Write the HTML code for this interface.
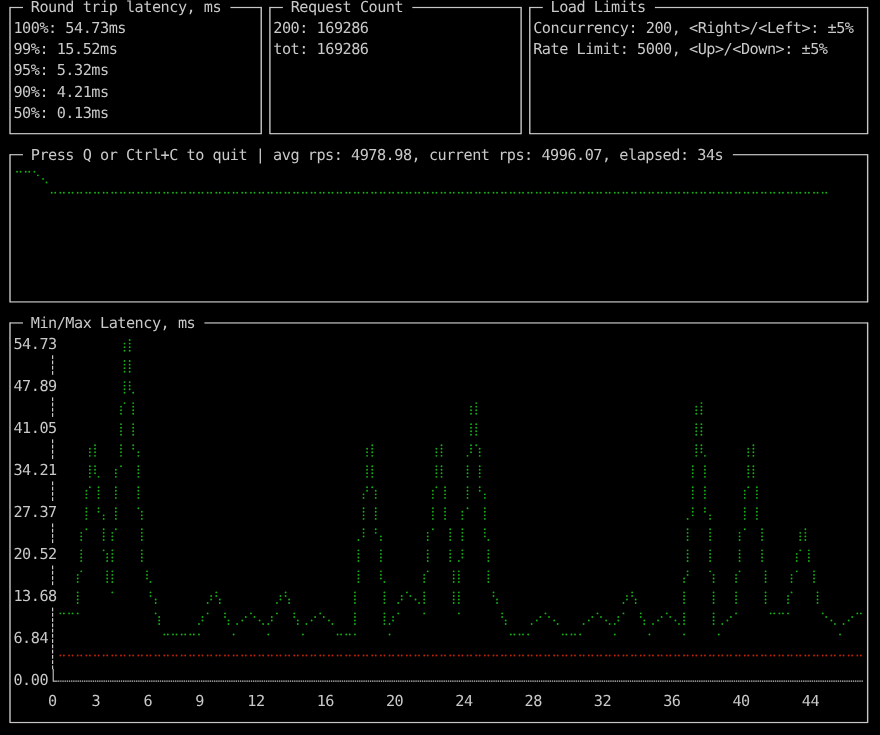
<!DOCTYPE html>
<html lang="en">
<head>
<meta charset="utf-8">
<title>load test dashboard</title>
<style>
html,body{margin:0;padding:0;background:#000;}
body{width:880px;height:735px;overflow:hidden;position:relative;}
#term{position:absolute;left:0;top:0;width:880px;height:735px;overflow:hidden;}
#txt{position:absolute;left:0;top:0;width:880px;height:735px;will-change:transform;}
#term svg{position:absolute;left:0;top:0;}
.t{position:absolute;white-space:pre;font-family:"DejaVu Sans Mono","Liberation Mono",monospace;font-size:15.2px;line-height:21px;height:21px;color:#c9c9c9;letter-spacing:-0.4882px;text-rendering:geometricPrecision;-webkit-font-smoothing:antialiased;}
</style>
</head>
<body>
<div id="term">
<svg width="880" height="735" viewBox="0 0 880 735">
<rect x="9.30" y="6.90" width="1.40" height="127.23" fill="#c6c6c6"/>
<rect x="260.53" y="6.90" width="1.40" height="127.23" fill="#c6c6c6"/>
<rect x="10.00" y="133.08" width="251.23" height="1.20" fill="#c6c6c6"/>
<rect x="10.00" y="6.90" width="12.99" height="1.20" fill="#c6c6c6"/>
<rect x="230.41" y="6.90" width="30.82" height="1.20" fill="#c6c6c6"/>
<rect x="269.19" y="6.90" width="1.40" height="127.23" fill="#c6c6c6"/>
<rect x="520.42" y="6.90" width="1.40" height="127.23" fill="#c6c6c6"/>
<rect x="269.89" y="133.08" width="251.23" height="1.20" fill="#c6c6c6"/>
<rect x="269.89" y="6.90" width="12.99" height="1.20" fill="#c6c6c6"/>
<rect x="412.33" y="6.90" width="108.79" height="1.20" fill="#c6c6c6"/>
<rect x="529.08" y="6.90" width="1.40" height="127.23" fill="#c6c6c6"/>
<rect x="866.94" y="6.90" width="1.40" height="127.23" fill="#c6c6c6"/>
<rect x="529.78" y="133.08" width="337.86" height="1.20" fill="#c6c6c6"/>
<rect x="529.78" y="6.90" width="12.99" height="1.20" fill="#c6c6c6"/>
<rect x="654.89" y="6.90" width="212.74" height="1.20" fill="#c6c6c6"/>
<rect x="9.30" y="154.11" width="1.40" height="148.26" fill="#c6c6c6"/>
<rect x="866.94" y="154.11" width="1.40" height="148.26" fill="#c6c6c6"/>
<rect x="10.00" y="301.32" width="857.64" height="1.20" fill="#c6c6c6"/>
<rect x="10.00" y="154.11" width="12.99" height="1.20" fill="#c6c6c6"/>
<rect x="732.86" y="154.11" width="134.78" height="1.20" fill="#c6c6c6"/>
<rect x="9.30" y="322.35" width="1.40" height="400.62" fill="#c6c6c6"/>
<rect x="866.94" y="322.35" width="1.40" height="400.62" fill="#c6c6c6"/>
<rect x="10.00" y="721.92" width="857.64" height="1.20" fill="#c6c6c6"/>
<rect x="10.00" y="322.35" width="12.99" height="1.20" fill="#c6c6c6"/>
<rect x="204.42" y="322.35" width="663.22" height="1.20" fill="#c6c6c6"/>
<rect x="52.00" y="355.26" width="1.2" height="3.8" fill="#c8c8c8"/>
<rect x="52.00" y="360.52" width="1.2" height="3.8" fill="#c8c8c8"/>
<rect x="52.00" y="365.77" width="1.2" height="3.8" fill="#c8c8c8"/>
<rect x="52.00" y="371.03" width="1.2" height="3.8" fill="#c8c8c8"/>
<rect x="52.00" y="397.32" width="1.2" height="3.8" fill="#c8c8c8"/>
<rect x="52.00" y="402.58" width="1.2" height="3.8" fill="#c8c8c8"/>
<rect x="52.00" y="407.84" width="1.2" height="3.8" fill="#c8c8c8"/>
<rect x="52.00" y="413.09" width="1.2" height="3.8" fill="#c8c8c8"/>
<rect x="52.00" y="439.38" width="1.2" height="3.8" fill="#c8c8c8"/>
<rect x="52.00" y="444.64" width="1.2" height="3.8" fill="#c8c8c8"/>
<rect x="52.00" y="449.89" width="1.2" height="3.8" fill="#c8c8c8"/>
<rect x="52.00" y="455.15" width="1.2" height="3.8" fill="#c8c8c8"/>
<rect x="52.00" y="481.44" width="1.2" height="3.8" fill="#c8c8c8"/>
<rect x="52.00" y="486.70" width="1.2" height="3.8" fill="#c8c8c8"/>
<rect x="52.00" y="491.96" width="1.2" height="3.8" fill="#c8c8c8"/>
<rect x="52.00" y="497.21" width="1.2" height="3.8" fill="#c8c8c8"/>
<rect x="52.00" y="523.50" width="1.2" height="3.8" fill="#c8c8c8"/>
<rect x="52.00" y="528.76" width="1.2" height="3.8" fill="#c8c8c8"/>
<rect x="52.00" y="534.01" width="1.2" height="3.8" fill="#c8c8c8"/>
<rect x="52.00" y="539.27" width="1.2" height="3.8" fill="#c8c8c8"/>
<rect x="52.00" y="565.56" width="1.2" height="3.8" fill="#c8c8c8"/>
<rect x="52.00" y="570.82" width="1.2" height="3.8" fill="#c8c8c8"/>
<rect x="52.00" y="576.08" width="1.2" height="3.8" fill="#c8c8c8"/>
<rect x="52.00" y="581.33" width="1.2" height="3.8" fill="#c8c8c8"/>
<rect x="52.00" y="607.62" width="1.2" height="3.8" fill="#c8c8c8"/>
<rect x="52.00" y="612.88" width="1.2" height="3.8" fill="#c8c8c8"/>
<rect x="52.00" y="618.13" width="1.2" height="3.8" fill="#c8c8c8"/>
<rect x="52.00" y="623.39" width="1.2" height="3.8" fill="#c8c8c8"/>
<rect x="52.00" y="628.65" width="1.2" height="3.8" fill="#c8c8c8"/>
<rect x="52.00" y="633.91" width="1.2" height="3.8" fill="#c8c8c8"/>
<rect x="52.00" y="639.17" width="1.2" height="3.8" fill="#c8c8c8"/>
<rect x="52.00" y="644.42" width="1.2" height="3.8" fill="#c8c8c8"/>
<rect x="52.00" y="649.68" width="1.2" height="3.8" fill="#c8c8c8"/>
<rect x="52.00" y="654.94" width="1.2" height="3.8" fill="#c8c8c8"/>
<rect x="52.00" y="660.20" width="1.2" height="3.8" fill="#c8c8c8"/>
<rect x="52.00" y="665.45" width="1.2" height="3.8" fill="#c8c8c8"/>
<rect x="52.67" y="668.96" width="1.10" height="12.75" fill="#c6c6c6"/>
<rect x="53.22" y="680.61" width="4.43" height="1.10" fill="#c6c6c6"/>
<line x1="57.65" y1="681.16" x2="863.31" y2="681.16" stroke="#c6c6c6" stroke-width="1.15" stroke-dasharray="1.35 0.8157" stroke-dashoffset="-0.4"/>
<g fill="#14b014"><circle cx="17.05" cy="171.79" r="0.95"/><circle cx="20.55" cy="171.79" r="0.95"/><circle cx="25.72" cy="171.79" r="0.95"/><circle cx="29.22" cy="171.79" r="0.95"/><circle cx="34.38" cy="171.79" r="0.95"/><circle cx="37.88" cy="175.34" r="0.95"/><circle cx="43.04" cy="178.89" r="0.95"/><circle cx="46.54" cy="182.44" r="0.95"/><circle cx="51.70" cy="192.82" r="0.95"/><circle cx="55.20" cy="192.82" r="0.95"/><circle cx="60.37" cy="192.82" r="0.95"/><circle cx="63.87" cy="192.82" r="0.95"/><circle cx="69.03" cy="192.82" r="0.95"/><circle cx="72.53" cy="192.82" r="0.95"/><circle cx="77.69" cy="192.82" r="0.95"/><circle cx="81.19" cy="192.82" r="0.95"/><circle cx="86.36" cy="192.82" r="0.95"/><circle cx="89.86" cy="192.82" r="0.95"/><circle cx="95.02" cy="192.82" r="0.95"/><circle cx="98.52" cy="192.82" r="0.95"/><circle cx="103.68" cy="192.82" r="0.95"/><circle cx="107.18" cy="192.82" r="0.95"/><circle cx="112.35" cy="192.82" r="0.95"/><circle cx="115.85" cy="192.82" r="0.95"/><circle cx="121.01" cy="192.82" r="0.95"/><circle cx="124.51" cy="192.82" r="0.95"/><circle cx="129.67" cy="192.82" r="0.95"/><circle cx="133.17" cy="192.82" r="0.95"/><circle cx="138.33" cy="192.82" r="0.95"/><circle cx="141.83" cy="192.82" r="0.95"/><circle cx="147.00" cy="192.82" r="0.95"/><circle cx="150.50" cy="192.82" r="0.95"/><circle cx="155.66" cy="192.82" r="0.95"/><circle cx="159.16" cy="192.82" r="0.95"/><circle cx="164.32" cy="192.82" r="0.95"/><circle cx="167.82" cy="192.82" r="0.95"/><circle cx="172.99" cy="192.82" r="0.95"/><circle cx="176.49" cy="192.82" r="0.95"/><circle cx="181.65" cy="192.82" r="0.95"/><circle cx="185.15" cy="192.82" r="0.95"/><circle cx="190.31" cy="192.82" r="0.95"/><circle cx="193.81" cy="192.82" r="0.95"/><circle cx="198.98" cy="192.82" r="0.95"/><circle cx="202.48" cy="192.82" r="0.95"/><circle cx="207.64" cy="192.82" r="0.95"/><circle cx="211.14" cy="192.82" r="0.95"/><circle cx="216.30" cy="192.82" r="0.95"/><circle cx="219.80" cy="192.82" r="0.95"/><circle cx="224.97" cy="192.82" r="0.95"/><circle cx="228.47" cy="192.82" r="0.95"/><circle cx="233.63" cy="192.82" r="0.95"/><circle cx="237.13" cy="192.82" r="0.95"/><circle cx="242.29" cy="192.82" r="0.95"/><circle cx="245.79" cy="192.82" r="0.95"/><circle cx="250.95" cy="192.82" r="0.95"/><circle cx="254.45" cy="192.82" r="0.95"/><circle cx="259.62" cy="192.82" r="0.95"/><circle cx="263.12" cy="192.82" r="0.95"/><circle cx="268.28" cy="192.82" r="0.95"/><circle cx="271.78" cy="192.82" r="0.95"/><circle cx="276.94" cy="192.82" r="0.95"/><circle cx="280.44" cy="192.82" r="0.95"/><circle cx="285.61" cy="192.82" r="0.95"/><circle cx="289.11" cy="192.82" r="0.95"/><circle cx="294.27" cy="192.82" r="0.95"/><circle cx="297.77" cy="192.82" r="0.95"/><circle cx="302.93" cy="192.82" r="0.95"/><circle cx="306.43" cy="192.82" r="0.95"/><circle cx="311.60" cy="192.82" r="0.95"/><circle cx="315.10" cy="192.82" r="0.95"/><circle cx="320.26" cy="192.82" r="0.95"/><circle cx="323.76" cy="192.82" r="0.95"/><circle cx="328.92" cy="192.82" r="0.95"/><circle cx="332.42" cy="192.82" r="0.95"/><circle cx="337.58" cy="192.82" r="0.95"/><circle cx="341.08" cy="192.82" r="0.95"/><circle cx="346.25" cy="192.82" r="0.95"/><circle cx="349.75" cy="192.82" r="0.95"/><circle cx="354.91" cy="192.82" r="0.95"/><circle cx="358.41" cy="192.82" r="0.95"/><circle cx="363.57" cy="192.82" r="0.95"/><circle cx="367.07" cy="192.82" r="0.95"/><circle cx="372.24" cy="192.82" r="0.95"/><circle cx="375.74" cy="192.82" r="0.95"/><circle cx="380.90" cy="192.82" r="0.95"/><circle cx="384.40" cy="192.82" r="0.95"/><circle cx="389.56" cy="192.82" r="0.95"/><circle cx="393.06" cy="192.82" r="0.95"/><circle cx="398.23" cy="192.82" r="0.95"/><circle cx="401.73" cy="192.82" r="0.95"/><circle cx="406.89" cy="192.82" r="0.95"/><circle cx="410.39" cy="192.82" r="0.95"/><circle cx="415.55" cy="192.82" r="0.95"/><circle cx="419.05" cy="192.82" r="0.95"/><circle cx="424.21" cy="192.82" r="0.95"/><circle cx="427.71" cy="192.82" r="0.95"/><circle cx="432.88" cy="192.82" r="0.95"/><circle cx="436.38" cy="192.82" r="0.95"/><circle cx="441.54" cy="192.82" r="0.95"/><circle cx="445.04" cy="192.82" r="0.95"/><circle cx="450.20" cy="192.82" r="0.95"/><circle cx="453.70" cy="192.82" r="0.95"/><circle cx="458.87" cy="192.82" r="0.95"/><circle cx="462.37" cy="192.82" r="0.95"/><circle cx="467.53" cy="192.82" r="0.95"/><circle cx="471.03" cy="192.82" r="0.95"/><circle cx="476.19" cy="192.82" r="0.95"/><circle cx="479.69" cy="192.82" r="0.95"/><circle cx="484.86" cy="192.82" r="0.95"/><circle cx="488.36" cy="192.82" r="0.95"/><circle cx="493.52" cy="192.82" r="0.95"/><circle cx="497.02" cy="192.82" r="0.95"/><circle cx="502.18" cy="192.82" r="0.95"/><circle cx="505.68" cy="192.82" r="0.95"/><circle cx="510.84" cy="192.82" r="0.95"/><circle cx="514.34" cy="192.82" r="0.95"/><circle cx="519.51" cy="192.82" r="0.95"/><circle cx="523.01" cy="192.82" r="0.95"/><circle cx="528.17" cy="192.82" r="0.95"/><circle cx="531.67" cy="192.82" r="0.95"/><circle cx="536.83" cy="192.82" r="0.95"/><circle cx="540.33" cy="192.82" r="0.95"/><circle cx="545.50" cy="192.82" r="0.95"/><circle cx="549.00" cy="192.82" r="0.95"/><circle cx="554.16" cy="192.82" r="0.95"/><circle cx="557.66" cy="192.82" r="0.95"/><circle cx="562.82" cy="192.82" r="0.95"/><circle cx="566.32" cy="192.82" r="0.95"/><circle cx="571.49" cy="192.82" r="0.95"/><circle cx="574.99" cy="192.82" r="0.95"/><circle cx="580.15" cy="192.82" r="0.95"/><circle cx="583.65" cy="192.82" r="0.95"/><circle cx="588.81" cy="192.82" r="0.95"/><circle cx="592.31" cy="192.82" r="0.95"/><circle cx="597.47" cy="192.82" r="0.95"/><circle cx="600.97" cy="192.82" r="0.95"/><circle cx="606.14" cy="192.82" r="0.95"/><circle cx="609.64" cy="192.82" r="0.95"/><circle cx="614.80" cy="192.82" r="0.95"/><circle cx="618.30" cy="192.82" r="0.95"/><circle cx="623.46" cy="192.82" r="0.95"/><circle cx="626.96" cy="192.82" r="0.95"/><circle cx="632.13" cy="192.82" r="0.95"/><circle cx="635.63" cy="192.82" r="0.95"/><circle cx="640.79" cy="192.82" r="0.95"/><circle cx="644.29" cy="192.82" r="0.95"/><circle cx="649.45" cy="192.82" r="0.95"/><circle cx="652.95" cy="192.82" r="0.95"/><circle cx="658.12" cy="192.82" r="0.95"/><circle cx="661.62" cy="192.82" r="0.95"/><circle cx="666.78" cy="192.82" r="0.95"/><circle cx="670.28" cy="192.82" r="0.95"/><circle cx="675.44" cy="192.82" r="0.95"/><circle cx="678.94" cy="192.82" r="0.95"/><circle cx="684.10" cy="192.82" r="0.95"/><circle cx="687.60" cy="192.82" r="0.95"/><circle cx="692.77" cy="192.82" r="0.95"/><circle cx="696.27" cy="192.82" r="0.95"/><circle cx="701.43" cy="192.82" r="0.95"/><circle cx="704.93" cy="192.82" r="0.95"/><circle cx="710.09" cy="192.82" r="0.95"/><circle cx="713.59" cy="192.82" r="0.95"/><circle cx="718.76" cy="192.82" r="0.95"/><circle cx="722.26" cy="192.82" r="0.95"/><circle cx="727.42" cy="192.82" r="0.95"/><circle cx="730.92" cy="192.82" r="0.95"/><circle cx="736.08" cy="192.82" r="0.95"/><circle cx="739.58" cy="192.82" r="0.95"/><circle cx="744.75" cy="192.82" r="0.95"/><circle cx="748.25" cy="192.82" r="0.95"/><circle cx="753.41" cy="192.82" r="0.95"/><circle cx="756.91" cy="192.82" r="0.95"/><circle cx="762.07" cy="192.82" r="0.95"/><circle cx="765.57" cy="192.82" r="0.95"/><circle cx="770.73" cy="192.82" r="0.95"/><circle cx="774.23" cy="192.82" r="0.95"/><circle cx="779.40" cy="192.82" r="0.95"/><circle cx="782.90" cy="192.82" r="0.95"/><circle cx="788.06" cy="192.82" r="0.95"/><circle cx="791.56" cy="192.82" r="0.95"/><circle cx="796.72" cy="192.82" r="0.95"/><circle cx="800.22" cy="192.82" r="0.95"/><circle cx="805.39" cy="192.82" r="0.95"/><circle cx="808.89" cy="192.82" r="0.95"/><circle cx="814.05" cy="192.82" r="0.95"/><circle cx="817.55" cy="192.82" r="0.95"/><circle cx="822.71" cy="192.82" r="0.95"/><circle cx="826.21" cy="192.82" r="0.95"/></g>
<g fill="#c42205"><circle cx="60.37" cy="655.48" r="0.95"/><circle cx="63.87" cy="655.48" r="0.95"/><circle cx="69.03" cy="655.48" r="0.95"/><circle cx="72.53" cy="655.48" r="0.95"/><circle cx="77.69" cy="655.48" r="0.95"/><circle cx="81.19" cy="655.48" r="0.95"/><circle cx="86.36" cy="655.48" r="0.95"/><circle cx="89.86" cy="655.48" r="0.95"/><circle cx="95.02" cy="655.48" r="0.95"/><circle cx="98.52" cy="655.48" r="0.95"/><circle cx="103.68" cy="655.48" r="0.95"/><circle cx="107.18" cy="655.48" r="0.95"/><circle cx="112.35" cy="655.48" r="0.95"/><circle cx="115.85" cy="655.48" r="0.95"/><circle cx="121.01" cy="655.48" r="0.95"/><circle cx="124.51" cy="655.48" r="0.95"/><circle cx="129.67" cy="655.48" r="0.95"/><circle cx="133.17" cy="655.48" r="0.95"/><circle cx="138.33" cy="655.48" r="0.95"/><circle cx="141.83" cy="655.48" r="0.95"/><circle cx="147.00" cy="655.48" r="0.95"/><circle cx="150.50" cy="655.48" r="0.95"/><circle cx="155.66" cy="655.48" r="0.95"/><circle cx="159.16" cy="655.48" r="0.95"/><circle cx="164.32" cy="655.48" r="0.95"/><circle cx="167.82" cy="655.48" r="0.95"/><circle cx="172.99" cy="655.48" r="0.95"/><circle cx="176.49" cy="655.48" r="0.95"/><circle cx="181.65" cy="655.48" r="0.95"/><circle cx="185.15" cy="655.48" r="0.95"/><circle cx="190.31" cy="655.48" r="0.95"/><circle cx="193.81" cy="655.48" r="0.95"/><circle cx="198.98" cy="655.48" r="0.95"/><circle cx="202.48" cy="655.48" r="0.95"/><circle cx="207.64" cy="655.48" r="0.95"/><circle cx="211.14" cy="655.48" r="0.95"/><circle cx="216.30" cy="655.48" r="0.95"/><circle cx="219.80" cy="655.48" r="0.95"/><circle cx="224.97" cy="655.48" r="0.95"/><circle cx="228.47" cy="655.48" r="0.95"/><circle cx="233.63" cy="655.48" r="0.95"/><circle cx="237.13" cy="655.48" r="0.95"/><circle cx="242.29" cy="655.48" r="0.95"/><circle cx="245.79" cy="655.48" r="0.95"/><circle cx="250.95" cy="655.48" r="0.95"/><circle cx="254.45" cy="655.48" r="0.95"/><circle cx="259.62" cy="655.48" r="0.95"/><circle cx="263.12" cy="655.48" r="0.95"/><circle cx="268.28" cy="655.48" r="0.95"/><circle cx="271.78" cy="655.48" r="0.95"/><circle cx="276.94" cy="655.48" r="0.95"/><circle cx="280.44" cy="655.48" r="0.95"/><circle cx="285.61" cy="655.48" r="0.95"/><circle cx="289.11" cy="655.48" r="0.95"/><circle cx="294.27" cy="655.48" r="0.95"/><circle cx="297.77" cy="655.48" r="0.95"/><circle cx="302.93" cy="655.48" r="0.95"/><circle cx="306.43" cy="655.48" r="0.95"/><circle cx="311.60" cy="655.48" r="0.95"/><circle cx="315.10" cy="655.48" r="0.95"/><circle cx="320.26" cy="655.48" r="0.95"/><circle cx="323.76" cy="655.48" r="0.95"/><circle cx="328.92" cy="655.48" r="0.95"/><circle cx="332.42" cy="655.48" r="0.95"/><circle cx="337.58" cy="655.48" r="0.95"/><circle cx="341.08" cy="655.48" r="0.95"/><circle cx="346.25" cy="655.48" r="0.95"/><circle cx="349.75" cy="655.48" r="0.95"/><circle cx="354.91" cy="655.48" r="0.95"/><circle cx="358.41" cy="655.48" r="0.95"/><circle cx="363.57" cy="655.48" r="0.95"/><circle cx="367.07" cy="655.48" r="0.95"/><circle cx="372.24" cy="655.48" r="0.95"/><circle cx="375.74" cy="655.48" r="0.95"/><circle cx="380.90" cy="655.48" r="0.95"/><circle cx="384.40" cy="655.48" r="0.95"/><circle cx="389.56" cy="655.48" r="0.95"/><circle cx="393.06" cy="655.48" r="0.95"/><circle cx="398.23" cy="655.48" r="0.95"/><circle cx="401.73" cy="655.48" r="0.95"/><circle cx="406.89" cy="655.48" r="0.95"/><circle cx="410.39" cy="655.48" r="0.95"/><circle cx="415.55" cy="655.48" r="0.95"/><circle cx="419.05" cy="655.48" r="0.95"/><circle cx="424.21" cy="655.48" r="0.95"/><circle cx="427.71" cy="655.48" r="0.95"/><circle cx="432.88" cy="655.48" r="0.95"/><circle cx="436.38" cy="655.48" r="0.95"/><circle cx="441.54" cy="655.48" r="0.95"/><circle cx="445.04" cy="655.48" r="0.95"/><circle cx="450.20" cy="655.48" r="0.95"/><circle cx="453.70" cy="655.48" r="0.95"/><circle cx="458.87" cy="655.48" r="0.95"/><circle cx="462.37" cy="655.48" r="0.95"/><circle cx="467.53" cy="655.48" r="0.95"/><circle cx="471.03" cy="655.48" r="0.95"/><circle cx="476.19" cy="655.48" r="0.95"/><circle cx="479.69" cy="655.48" r="0.95"/><circle cx="484.86" cy="655.48" r="0.95"/><circle cx="488.36" cy="655.48" r="0.95"/><circle cx="493.52" cy="655.48" r="0.95"/><circle cx="497.02" cy="655.48" r="0.95"/><circle cx="502.18" cy="655.48" r="0.95"/><circle cx="505.68" cy="655.48" r="0.95"/><circle cx="510.84" cy="655.48" r="0.95"/><circle cx="514.34" cy="655.48" r="0.95"/><circle cx="519.51" cy="655.48" r="0.95"/><circle cx="523.01" cy="655.48" r="0.95"/><circle cx="528.17" cy="655.48" r="0.95"/><circle cx="531.67" cy="655.48" r="0.95"/><circle cx="536.83" cy="655.48" r="0.95"/><circle cx="540.33" cy="655.48" r="0.95"/><circle cx="545.50" cy="655.48" r="0.95"/><circle cx="549.00" cy="655.48" r="0.95"/><circle cx="554.16" cy="655.48" r="0.95"/><circle cx="557.66" cy="655.48" r="0.95"/><circle cx="562.82" cy="655.48" r="0.95"/><circle cx="566.32" cy="655.48" r="0.95"/><circle cx="571.49" cy="655.48" r="0.95"/><circle cx="574.99" cy="655.48" r="0.95"/><circle cx="580.15" cy="655.48" r="0.95"/><circle cx="583.65" cy="655.48" r="0.95"/><circle cx="588.81" cy="655.48" r="0.95"/><circle cx="592.31" cy="655.48" r="0.95"/><circle cx="597.47" cy="655.48" r="0.95"/><circle cx="600.97" cy="655.48" r="0.95"/><circle cx="606.14" cy="655.48" r="0.95"/><circle cx="609.64" cy="655.48" r="0.95"/><circle cx="614.80" cy="655.48" r="0.95"/><circle cx="618.30" cy="655.48" r="0.95"/><circle cx="623.46" cy="655.48" r="0.95"/><circle cx="626.96" cy="655.48" r="0.95"/><circle cx="632.13" cy="655.48" r="0.95"/><circle cx="635.63" cy="655.48" r="0.95"/><circle cx="640.79" cy="655.48" r="0.95"/><circle cx="644.29" cy="655.48" r="0.95"/><circle cx="649.45" cy="655.48" r="0.95"/><circle cx="652.95" cy="655.48" r="0.95"/><circle cx="658.12" cy="655.48" r="0.95"/><circle cx="661.62" cy="655.48" r="0.95"/><circle cx="666.78" cy="655.48" r="0.95"/><circle cx="670.28" cy="655.48" r="0.95"/><circle cx="675.44" cy="655.48" r="0.95"/><circle cx="678.94" cy="655.48" r="0.95"/><circle cx="684.10" cy="655.48" r="0.95"/><circle cx="687.60" cy="655.48" r="0.95"/><circle cx="692.77" cy="655.48" r="0.95"/><circle cx="696.27" cy="655.48" r="0.95"/><circle cx="701.43" cy="655.48" r="0.95"/><circle cx="704.93" cy="655.48" r="0.95"/><circle cx="710.09" cy="655.48" r="0.95"/><circle cx="713.59" cy="655.48" r="0.95"/><circle cx="718.76" cy="655.48" r="0.95"/><circle cx="722.26" cy="655.48" r="0.95"/><circle cx="727.42" cy="655.48" r="0.95"/><circle cx="730.92" cy="655.48" r="0.95"/><circle cx="736.08" cy="655.48" r="0.95"/><circle cx="739.58" cy="655.48" r="0.95"/><circle cx="744.75" cy="655.48" r="0.95"/><circle cx="748.25" cy="655.48" r="0.95"/><circle cx="753.41" cy="655.48" r="0.95"/><circle cx="756.91" cy="655.48" r="0.95"/><circle cx="762.07" cy="655.48" r="0.95"/><circle cx="765.57" cy="655.48" r="0.95"/><circle cx="770.73" cy="655.48" r="0.95"/><circle cx="774.23" cy="655.48" r="0.95"/><circle cx="779.40" cy="655.48" r="0.95"/><circle cx="782.90" cy="655.48" r="0.95"/><circle cx="788.06" cy="655.48" r="0.95"/><circle cx="791.56" cy="655.48" r="0.95"/><circle cx="796.72" cy="655.48" r="0.95"/><circle cx="800.22" cy="655.48" r="0.95"/><circle cx="805.39" cy="655.48" r="0.95"/><circle cx="808.89" cy="655.48" r="0.95"/><circle cx="814.05" cy="655.48" r="0.95"/><circle cx="817.55" cy="655.48" r="0.95"/><circle cx="822.71" cy="655.48" r="0.95"/><circle cx="826.21" cy="655.48" r="0.95"/><circle cx="831.38" cy="655.48" r="0.95"/><circle cx="834.88" cy="655.48" r="0.95"/><circle cx="840.04" cy="655.48" r="0.95"/><circle cx="843.54" cy="655.48" r="0.95"/><circle cx="848.70" cy="655.48" r="0.95"/><circle cx="852.20" cy="655.48" r="0.95"/><circle cx="857.36" cy="655.48" r="0.95"/><circle cx="860.86" cy="655.48" r="0.95"/></g>
<g fill="#14b014"><circle cx="60.37" cy="613.42" r="0.95"/><circle cx="63.87" cy="613.42" r="0.95"/><circle cx="69.03" cy="613.42" r="0.95"/><circle cx="72.53" cy="613.42" r="0.95"/><circle cx="77.69" cy="574.91" r="0.95"/><circle cx="77.69" cy="578.46" r="0.95"/><circle cx="77.69" cy="582.01" r="0.95"/><circle cx="77.69" cy="592.39" r="0.95"/><circle cx="77.69" cy="595.94" r="0.95"/><circle cx="77.69" cy="599.49" r="0.95"/><circle cx="77.69" cy="603.04" r="0.95"/><circle cx="77.69" cy="613.42" r="0.95"/><circle cx="81.19" cy="532.85" r="0.95"/><circle cx="81.19" cy="536.40" r="0.95"/><circle cx="81.19" cy="539.95" r="0.95"/><circle cx="81.19" cy="550.33" r="0.95"/><circle cx="81.19" cy="553.88" r="0.95"/><circle cx="81.19" cy="557.43" r="0.95"/><circle cx="81.19" cy="560.98" r="0.95"/><circle cx="81.19" cy="571.36" r="0.95"/><circle cx="86.36" cy="490.79" r="0.95"/><circle cx="86.36" cy="494.34" r="0.95"/><circle cx="86.36" cy="497.89" r="0.95"/><circle cx="86.36" cy="508.27" r="0.95"/><circle cx="86.36" cy="511.82" r="0.95"/><circle cx="86.36" cy="515.37" r="0.95"/><circle cx="86.36" cy="518.92" r="0.95"/><circle cx="86.36" cy="529.30" r="0.95"/><circle cx="89.86" cy="448.73" r="0.95"/><circle cx="89.86" cy="452.28" r="0.95"/><circle cx="89.86" cy="455.83" r="0.95"/><circle cx="89.86" cy="466.21" r="0.95"/><circle cx="89.86" cy="469.76" r="0.95"/><circle cx="89.86" cy="473.31" r="0.95"/><circle cx="89.86" cy="476.86" r="0.95"/><circle cx="89.86" cy="487.24" r="0.95"/><circle cx="95.02" cy="445.18" r="0.95"/><circle cx="95.02" cy="448.73" r="0.95"/><circle cx="95.02" cy="452.28" r="0.95"/><circle cx="95.02" cy="455.83" r="0.95"/><circle cx="95.02" cy="466.21" r="0.95"/><circle cx="95.02" cy="469.76" r="0.95"/><circle cx="95.02" cy="473.31" r="0.95"/><circle cx="98.52" cy="476.86" r="0.95"/><circle cx="98.52" cy="487.24" r="0.95"/><circle cx="98.52" cy="490.79" r="0.95"/><circle cx="98.52" cy="494.34" r="0.95"/><circle cx="98.52" cy="497.89" r="0.95"/><circle cx="98.52" cy="508.27" r="0.95"/><circle cx="98.52" cy="511.82" r="0.95"/><circle cx="103.68" cy="515.37" r="0.95"/><circle cx="103.68" cy="518.92" r="0.95"/><circle cx="103.68" cy="529.30" r="0.95"/><circle cx="103.68" cy="532.85" r="0.95"/><circle cx="103.68" cy="536.40" r="0.95"/><circle cx="103.68" cy="539.95" r="0.95"/><circle cx="103.68" cy="550.33" r="0.95"/><circle cx="107.18" cy="553.88" r="0.95"/><circle cx="107.18" cy="557.43" r="0.95"/><circle cx="107.18" cy="560.98" r="0.95"/><circle cx="107.18" cy="571.36" r="0.95"/><circle cx="107.18" cy="574.91" r="0.95"/><circle cx="107.18" cy="578.46" r="0.95"/><circle cx="107.18" cy="582.01" r="0.95"/><circle cx="112.35" cy="532.85" r="0.95"/><circle cx="112.35" cy="536.40" r="0.95"/><circle cx="112.35" cy="539.95" r="0.95"/><circle cx="112.35" cy="550.33" r="0.95"/><circle cx="112.35" cy="553.88" r="0.95"/><circle cx="112.35" cy="557.43" r="0.95"/><circle cx="112.35" cy="560.98" r="0.95"/><circle cx="112.35" cy="571.36" r="0.95"/><circle cx="112.35" cy="574.91" r="0.95"/><circle cx="112.35" cy="578.46" r="0.95"/><circle cx="112.35" cy="582.01" r="0.95"/><circle cx="112.35" cy="592.39" r="0.95"/><circle cx="115.85" cy="469.76" r="0.95"/><circle cx="115.85" cy="473.31" r="0.95"/><circle cx="115.85" cy="476.86" r="0.95"/><circle cx="115.85" cy="487.24" r="0.95"/><circle cx="115.85" cy="490.79" r="0.95"/><circle cx="115.85" cy="494.34" r="0.95"/><circle cx="115.85" cy="497.89" r="0.95"/><circle cx="115.85" cy="508.27" r="0.95"/><circle cx="115.85" cy="511.82" r="0.95"/><circle cx="115.85" cy="515.37" r="0.95"/><circle cx="115.85" cy="518.92" r="0.95"/><circle cx="115.85" cy="529.30" r="0.95"/><circle cx="121.01" cy="406.67" r="0.95"/><circle cx="121.01" cy="410.22" r="0.95"/><circle cx="121.01" cy="413.77" r="0.95"/><circle cx="121.01" cy="424.15" r="0.95"/><circle cx="121.01" cy="427.70" r="0.95"/><circle cx="121.01" cy="431.25" r="0.95"/><circle cx="121.01" cy="434.80" r="0.95"/><circle cx="121.01" cy="445.18" r="0.95"/><circle cx="121.01" cy="448.73" r="0.95"/><circle cx="121.01" cy="452.28" r="0.95"/><circle cx="121.01" cy="455.83" r="0.95"/><circle cx="121.01" cy="466.21" r="0.95"/><circle cx="124.51" cy="343.58" r="0.95"/><circle cx="124.51" cy="347.13" r="0.95"/><circle cx="124.51" cy="350.68" r="0.95"/><circle cx="124.51" cy="361.06" r="0.95"/><circle cx="124.51" cy="364.61" r="0.95"/><circle cx="124.51" cy="368.16" r="0.95"/><circle cx="124.51" cy="371.71" r="0.95"/><circle cx="124.51" cy="382.09" r="0.95"/><circle cx="124.51" cy="385.64" r="0.95"/><circle cx="124.51" cy="389.19" r="0.95"/><circle cx="124.51" cy="392.74" r="0.95"/><circle cx="124.51" cy="403.12" r="0.95"/><circle cx="129.67" cy="340.03" r="0.95"/><circle cx="129.67" cy="343.58" r="0.95"/><circle cx="129.67" cy="347.13" r="0.95"/><circle cx="129.67" cy="350.68" r="0.95"/><circle cx="129.67" cy="361.06" r="0.95"/><circle cx="129.67" cy="364.61" r="0.95"/><circle cx="129.67" cy="368.16" r="0.95"/><circle cx="129.67" cy="371.71" r="0.95"/><circle cx="129.67" cy="382.09" r="0.95"/><circle cx="129.67" cy="385.64" r="0.95"/><circle cx="129.67" cy="389.19" r="0.95"/><circle cx="133.17" cy="392.74" r="0.95"/><circle cx="133.17" cy="403.12" r="0.95"/><circle cx="133.17" cy="406.67" r="0.95"/><circle cx="133.17" cy="410.22" r="0.95"/><circle cx="133.17" cy="413.77" r="0.95"/><circle cx="133.17" cy="424.15" r="0.95"/><circle cx="133.17" cy="427.70" r="0.95"/><circle cx="133.17" cy="431.25" r="0.95"/><circle cx="133.17" cy="434.80" r="0.95"/><circle cx="133.17" cy="445.18" r="0.95"/><circle cx="133.17" cy="448.73" r="0.95"/><circle cx="138.33" cy="452.28" r="0.95"/><circle cx="138.33" cy="455.83" r="0.95"/><circle cx="138.33" cy="466.21" r="0.95"/><circle cx="138.33" cy="469.76" r="0.95"/><circle cx="138.33" cy="473.31" r="0.95"/><circle cx="138.33" cy="476.86" r="0.95"/><circle cx="138.33" cy="487.24" r="0.95"/><circle cx="138.33" cy="490.79" r="0.95"/><circle cx="138.33" cy="494.34" r="0.95"/><circle cx="138.33" cy="497.89" r="0.95"/><circle cx="138.33" cy="508.27" r="0.95"/><circle cx="141.83" cy="511.82" r="0.95"/><circle cx="141.83" cy="515.37" r="0.95"/><circle cx="141.83" cy="518.92" r="0.95"/><circle cx="141.83" cy="529.30" r="0.95"/><circle cx="141.83" cy="532.85" r="0.95"/><circle cx="141.83" cy="536.40" r="0.95"/><circle cx="141.83" cy="539.95" r="0.95"/><circle cx="141.83" cy="550.33" r="0.95"/><circle cx="141.83" cy="553.88" r="0.95"/><circle cx="141.83" cy="557.43" r="0.95"/><circle cx="141.83" cy="560.98" r="0.95"/><circle cx="147.00" cy="571.36" r="0.95"/><circle cx="147.00" cy="574.91" r="0.95"/><circle cx="147.00" cy="578.46" r="0.95"/><circle cx="150.50" cy="582.01" r="0.95"/><circle cx="150.50" cy="592.39" r="0.95"/><circle cx="150.50" cy="595.94" r="0.95"/><circle cx="155.66" cy="599.49" r="0.95"/><circle cx="155.66" cy="603.04" r="0.95"/><circle cx="155.66" cy="613.42" r="0.95"/><circle cx="159.16" cy="616.97" r="0.95"/><circle cx="159.16" cy="620.52" r="0.95"/><circle cx="159.16" cy="624.07" r="0.95"/><circle cx="164.32" cy="634.45" r="0.95"/><circle cx="167.82" cy="634.45" r="0.95"/><circle cx="172.99" cy="634.45" r="0.95"/><circle cx="176.49" cy="634.45" r="0.95"/><circle cx="181.65" cy="634.45" r="0.95"/><circle cx="185.15" cy="634.45" r="0.95"/><circle cx="190.31" cy="634.45" r="0.95"/><circle cx="193.81" cy="634.45" r="0.95"/><circle cx="198.98" cy="624.07" r="0.95"/><circle cx="198.98" cy="634.45" r="0.95"/><circle cx="202.48" cy="616.97" r="0.95"/><circle cx="202.48" cy="620.52" r="0.95"/><circle cx="207.64" cy="603.04" r="0.95"/><circle cx="207.64" cy="613.42" r="0.95"/><circle cx="211.14" cy="595.94" r="0.95"/><circle cx="211.14" cy="599.49" r="0.95"/><circle cx="216.30" cy="592.39" r="0.95"/><circle cx="216.30" cy="595.94" r="0.95"/><circle cx="219.80" cy="599.49" r="0.95"/><circle cx="219.80" cy="603.04" r="0.95"/><circle cx="224.97" cy="613.42" r="0.95"/><circle cx="224.97" cy="616.97" r="0.95"/><circle cx="228.47" cy="620.52" r="0.95"/><circle cx="228.47" cy="624.07" r="0.95"/><circle cx="233.63" cy="634.45" r="0.95"/><circle cx="237.13" cy="624.07" r="0.95"/><circle cx="242.29" cy="620.52" r="0.95"/><circle cx="245.79" cy="616.97" r="0.95"/><circle cx="250.95" cy="613.42" r="0.95"/><circle cx="254.45" cy="616.97" r="0.95"/><circle cx="259.62" cy="620.52" r="0.95"/><circle cx="263.12" cy="624.07" r="0.95"/><circle cx="268.28" cy="624.07" r="0.95"/><circle cx="268.28" cy="634.45" r="0.95"/><circle cx="271.78" cy="616.97" r="0.95"/><circle cx="271.78" cy="620.52" r="0.95"/><circle cx="276.94" cy="603.04" r="0.95"/><circle cx="276.94" cy="613.42" r="0.95"/><circle cx="280.44" cy="595.94" r="0.95"/><circle cx="280.44" cy="599.49" r="0.95"/><circle cx="285.61" cy="592.39" r="0.95"/><circle cx="285.61" cy="595.94" r="0.95"/><circle cx="289.11" cy="599.49" r="0.95"/><circle cx="289.11" cy="603.04" r="0.95"/><circle cx="294.27" cy="613.42" r="0.95"/><circle cx="294.27" cy="616.97" r="0.95"/><circle cx="297.77" cy="620.52" r="0.95"/><circle cx="297.77" cy="624.07" r="0.95"/><circle cx="302.93" cy="634.45" r="0.95"/><circle cx="306.43" cy="624.07" r="0.95"/><circle cx="311.60" cy="620.52" r="0.95"/><circle cx="315.10" cy="616.97" r="0.95"/><circle cx="320.26" cy="613.42" r="0.95"/><circle cx="323.76" cy="616.97" r="0.95"/><circle cx="328.92" cy="620.52" r="0.95"/><circle cx="332.42" cy="624.07" r="0.95"/><circle cx="337.58" cy="634.45" r="0.95"/><circle cx="341.08" cy="634.45" r="0.95"/><circle cx="346.25" cy="634.45" r="0.95"/><circle cx="349.75" cy="634.45" r="0.95"/><circle cx="354.91" cy="592.39" r="0.95"/><circle cx="354.91" cy="595.94" r="0.95"/><circle cx="354.91" cy="599.49" r="0.95"/><circle cx="354.91" cy="603.04" r="0.95"/><circle cx="354.91" cy="613.42" r="0.95"/><circle cx="354.91" cy="616.97" r="0.95"/><circle cx="354.91" cy="620.52" r="0.95"/><circle cx="354.91" cy="624.07" r="0.95"/><circle cx="354.91" cy="634.45" r="0.95"/><circle cx="358.41" cy="539.95" r="0.95"/><circle cx="358.41" cy="550.33" r="0.95"/><circle cx="358.41" cy="553.88" r="0.95"/><circle cx="358.41" cy="557.43" r="0.95"/><circle cx="358.41" cy="560.98" r="0.95"/><circle cx="358.41" cy="571.36" r="0.95"/><circle cx="358.41" cy="574.91" r="0.95"/><circle cx="358.41" cy="578.46" r="0.95"/><circle cx="358.41" cy="582.01" r="0.95"/><circle cx="363.57" cy="494.34" r="0.95"/><circle cx="363.57" cy="497.89" r="0.95"/><circle cx="363.57" cy="508.27" r="0.95"/><circle cx="363.57" cy="511.82" r="0.95"/><circle cx="363.57" cy="515.37" r="0.95"/><circle cx="363.57" cy="518.92" r="0.95"/><circle cx="363.57" cy="529.30" r="0.95"/><circle cx="363.57" cy="532.85" r="0.95"/><circle cx="363.57" cy="536.40" r="0.95"/><circle cx="367.07" cy="448.73" r="0.95"/><circle cx="367.07" cy="452.28" r="0.95"/><circle cx="367.07" cy="455.83" r="0.95"/><circle cx="367.07" cy="466.21" r="0.95"/><circle cx="367.07" cy="469.76" r="0.95"/><circle cx="367.07" cy="473.31" r="0.95"/><circle cx="367.07" cy="476.86" r="0.95"/><circle cx="367.07" cy="487.24" r="0.95"/><circle cx="367.07" cy="490.79" r="0.95"/><circle cx="372.24" cy="445.18" r="0.95"/><circle cx="372.24" cy="448.73" r="0.95"/><circle cx="372.24" cy="452.28" r="0.95"/><circle cx="372.24" cy="455.83" r="0.95"/><circle cx="372.24" cy="466.21" r="0.95"/><circle cx="372.24" cy="469.76" r="0.95"/><circle cx="372.24" cy="473.31" r="0.95"/><circle cx="372.24" cy="476.86" r="0.95"/><circle cx="372.24" cy="487.24" r="0.95"/><circle cx="375.74" cy="490.79" r="0.95"/><circle cx="375.74" cy="494.34" r="0.95"/><circle cx="375.74" cy="497.89" r="0.95"/><circle cx="375.74" cy="508.27" r="0.95"/><circle cx="375.74" cy="511.82" r="0.95"/><circle cx="375.74" cy="515.37" r="0.95"/><circle cx="375.74" cy="518.92" r="0.95"/><circle cx="375.74" cy="529.30" r="0.95"/><circle cx="375.74" cy="532.85" r="0.95"/><circle cx="380.90" cy="536.40" r="0.95"/><circle cx="380.90" cy="539.95" r="0.95"/><circle cx="380.90" cy="550.33" r="0.95"/><circle cx="380.90" cy="553.88" r="0.95"/><circle cx="380.90" cy="557.43" r="0.95"/><circle cx="380.90" cy="560.98" r="0.95"/><circle cx="380.90" cy="571.36" r="0.95"/><circle cx="380.90" cy="574.91" r="0.95"/><circle cx="380.90" cy="578.46" r="0.95"/><circle cx="384.40" cy="582.01" r="0.95"/><circle cx="384.40" cy="592.39" r="0.95"/><circle cx="384.40" cy="595.94" r="0.95"/><circle cx="384.40" cy="599.49" r="0.95"/><circle cx="384.40" cy="603.04" r="0.95"/><circle cx="384.40" cy="613.42" r="0.95"/><circle cx="384.40" cy="616.97" r="0.95"/><circle cx="384.40" cy="620.52" r="0.95"/><circle cx="384.40" cy="624.07" r="0.95"/><circle cx="389.56" cy="624.07" r="0.95"/><circle cx="389.56" cy="634.45" r="0.95"/><circle cx="393.06" cy="616.97" r="0.95"/><circle cx="393.06" cy="620.52" r="0.95"/><circle cx="398.23" cy="603.04" r="0.95"/><circle cx="398.23" cy="613.42" r="0.95"/><circle cx="401.73" cy="595.94" r="0.95"/><circle cx="401.73" cy="599.49" r="0.95"/><circle cx="406.89" cy="592.39" r="0.95"/><circle cx="410.39" cy="595.94" r="0.95"/><circle cx="415.55" cy="599.49" r="0.95"/><circle cx="419.05" cy="603.04" r="0.95"/><circle cx="424.21" cy="574.91" r="0.95"/><circle cx="424.21" cy="578.46" r="0.95"/><circle cx="424.21" cy="582.01" r="0.95"/><circle cx="424.21" cy="592.39" r="0.95"/><circle cx="424.21" cy="595.94" r="0.95"/><circle cx="424.21" cy="599.49" r="0.95"/><circle cx="424.21" cy="603.04" r="0.95"/><circle cx="424.21" cy="613.42" r="0.95"/><circle cx="427.71" cy="532.85" r="0.95"/><circle cx="427.71" cy="536.40" r="0.95"/><circle cx="427.71" cy="539.95" r="0.95"/><circle cx="427.71" cy="550.33" r="0.95"/><circle cx="427.71" cy="553.88" r="0.95"/><circle cx="427.71" cy="557.43" r="0.95"/><circle cx="427.71" cy="560.98" r="0.95"/><circle cx="427.71" cy="571.36" r="0.95"/><circle cx="432.88" cy="490.79" r="0.95"/><circle cx="432.88" cy="494.34" r="0.95"/><circle cx="432.88" cy="497.89" r="0.95"/><circle cx="432.88" cy="508.27" r="0.95"/><circle cx="432.88" cy="511.82" r="0.95"/><circle cx="432.88" cy="515.37" r="0.95"/><circle cx="432.88" cy="518.92" r="0.95"/><circle cx="432.88" cy="529.30" r="0.95"/><circle cx="436.38" cy="448.73" r="0.95"/><circle cx="436.38" cy="452.28" r="0.95"/><circle cx="436.38" cy="455.83" r="0.95"/><circle cx="436.38" cy="466.21" r="0.95"/><circle cx="436.38" cy="469.76" r="0.95"/><circle cx="436.38" cy="473.31" r="0.95"/><circle cx="436.38" cy="476.86" r="0.95"/><circle cx="436.38" cy="487.24" r="0.95"/><circle cx="441.54" cy="445.18" r="0.95"/><circle cx="441.54" cy="448.73" r="0.95"/><circle cx="441.54" cy="452.28" r="0.95"/><circle cx="441.54" cy="455.83" r="0.95"/><circle cx="441.54" cy="466.21" r="0.95"/><circle cx="441.54" cy="469.76" r="0.95"/><circle cx="441.54" cy="473.31" r="0.95"/><circle cx="441.54" cy="476.86" r="0.95"/><circle cx="445.04" cy="487.24" r="0.95"/><circle cx="445.04" cy="490.79" r="0.95"/><circle cx="445.04" cy="494.34" r="0.95"/><circle cx="445.04" cy="497.89" r="0.95"/><circle cx="445.04" cy="508.27" r="0.95"/><circle cx="445.04" cy="511.82" r="0.95"/><circle cx="445.04" cy="515.37" r="0.95"/><circle cx="445.04" cy="518.92" r="0.95"/><circle cx="450.20" cy="529.30" r="0.95"/><circle cx="450.20" cy="532.85" r="0.95"/><circle cx="450.20" cy="536.40" r="0.95"/><circle cx="450.20" cy="539.95" r="0.95"/><circle cx="450.20" cy="550.33" r="0.95"/><circle cx="450.20" cy="553.88" r="0.95"/><circle cx="450.20" cy="557.43" r="0.95"/><circle cx="450.20" cy="560.98" r="0.95"/><circle cx="453.70" cy="571.36" r="0.95"/><circle cx="453.70" cy="574.91" r="0.95"/><circle cx="453.70" cy="578.46" r="0.95"/><circle cx="453.70" cy="582.01" r="0.95"/><circle cx="453.70" cy="592.39" r="0.95"/><circle cx="453.70" cy="595.94" r="0.95"/><circle cx="453.70" cy="599.49" r="0.95"/><circle cx="453.70" cy="603.04" r="0.95"/><circle cx="458.87" cy="560.98" r="0.95"/><circle cx="458.87" cy="571.36" r="0.95"/><circle cx="458.87" cy="574.91" r="0.95"/><circle cx="458.87" cy="578.46" r="0.95"/><circle cx="458.87" cy="582.01" r="0.95"/><circle cx="458.87" cy="592.39" r="0.95"/><circle cx="458.87" cy="595.94" r="0.95"/><circle cx="458.87" cy="599.49" r="0.95"/><circle cx="458.87" cy="603.04" r="0.95"/><circle cx="458.87" cy="613.42" r="0.95"/><circle cx="462.37" cy="511.82" r="0.95"/><circle cx="462.37" cy="515.37" r="0.95"/><circle cx="462.37" cy="518.92" r="0.95"/><circle cx="462.37" cy="529.30" r="0.95"/><circle cx="462.37" cy="532.85" r="0.95"/><circle cx="462.37" cy="536.40" r="0.95"/><circle cx="462.37" cy="539.95" r="0.95"/><circle cx="462.37" cy="550.33" r="0.95"/><circle cx="462.37" cy="553.88" r="0.95"/><circle cx="462.37" cy="557.43" r="0.95"/><circle cx="467.53" cy="455.83" r="0.95"/><circle cx="467.53" cy="466.21" r="0.95"/><circle cx="467.53" cy="469.76" r="0.95"/><circle cx="467.53" cy="473.31" r="0.95"/><circle cx="467.53" cy="476.86" r="0.95"/><circle cx="467.53" cy="487.24" r="0.95"/><circle cx="467.53" cy="490.79" r="0.95"/><circle cx="467.53" cy="494.34" r="0.95"/><circle cx="467.53" cy="497.89" r="0.95"/><circle cx="467.53" cy="508.27" r="0.95"/><circle cx="471.03" cy="406.67" r="0.95"/><circle cx="471.03" cy="410.22" r="0.95"/><circle cx="471.03" cy="413.77" r="0.95"/><circle cx="471.03" cy="424.15" r="0.95"/><circle cx="471.03" cy="427.70" r="0.95"/><circle cx="471.03" cy="431.25" r="0.95"/><circle cx="471.03" cy="434.80" r="0.95"/><circle cx="471.03" cy="445.18" r="0.95"/><circle cx="471.03" cy="448.73" r="0.95"/><circle cx="471.03" cy="452.28" r="0.95"/><circle cx="476.19" cy="403.12" r="0.95"/><circle cx="476.19" cy="406.67" r="0.95"/><circle cx="476.19" cy="410.22" r="0.95"/><circle cx="476.19" cy="413.77" r="0.95"/><circle cx="476.19" cy="424.15" r="0.95"/><circle cx="476.19" cy="427.70" r="0.95"/><circle cx="476.19" cy="431.25" r="0.95"/><circle cx="476.19" cy="434.80" r="0.95"/><circle cx="476.19" cy="445.18" r="0.95"/><circle cx="479.69" cy="448.73" r="0.95"/><circle cx="479.69" cy="452.28" r="0.95"/><circle cx="479.69" cy="455.83" r="0.95"/><circle cx="479.69" cy="466.21" r="0.95"/><circle cx="479.69" cy="469.76" r="0.95"/><circle cx="479.69" cy="473.31" r="0.95"/><circle cx="479.69" cy="476.86" r="0.95"/><circle cx="479.69" cy="487.24" r="0.95"/><circle cx="479.69" cy="490.79" r="0.95"/><circle cx="484.86" cy="494.34" r="0.95"/><circle cx="484.86" cy="497.89" r="0.95"/><circle cx="484.86" cy="508.27" r="0.95"/><circle cx="484.86" cy="511.82" r="0.95"/><circle cx="484.86" cy="515.37" r="0.95"/><circle cx="484.86" cy="518.92" r="0.95"/><circle cx="484.86" cy="529.30" r="0.95"/><circle cx="484.86" cy="532.85" r="0.95"/><circle cx="484.86" cy="536.40" r="0.95"/><circle cx="488.36" cy="539.95" r="0.95"/><circle cx="488.36" cy="550.33" r="0.95"/><circle cx="488.36" cy="553.88" r="0.95"/><circle cx="488.36" cy="557.43" r="0.95"/><circle cx="488.36" cy="560.98" r="0.95"/><circle cx="488.36" cy="571.36" r="0.95"/><circle cx="488.36" cy="574.91" r="0.95"/><circle cx="488.36" cy="578.46" r="0.95"/><circle cx="488.36" cy="582.01" r="0.95"/><circle cx="493.52" cy="592.39" r="0.95"/><circle cx="493.52" cy="595.94" r="0.95"/><circle cx="497.02" cy="599.49" r="0.95"/><circle cx="497.02" cy="603.04" r="0.95"/><circle cx="502.18" cy="613.42" r="0.95"/><circle cx="502.18" cy="616.97" r="0.95"/><circle cx="505.68" cy="620.52" r="0.95"/><circle cx="505.68" cy="624.07" r="0.95"/><circle cx="510.84" cy="634.45" r="0.95"/><circle cx="514.34" cy="634.45" r="0.95"/><circle cx="519.51" cy="634.45" r="0.95"/><circle cx="523.01" cy="634.45" r="0.95"/><circle cx="528.17" cy="634.45" r="0.95"/><circle cx="531.67" cy="624.07" r="0.95"/><circle cx="536.83" cy="620.52" r="0.95"/><circle cx="540.33" cy="616.97" r="0.95"/><circle cx="545.50" cy="613.42" r="0.95"/><circle cx="549.00" cy="616.97" r="0.95"/><circle cx="554.16" cy="620.52" r="0.95"/><circle cx="557.66" cy="624.07" r="0.95"/><circle cx="562.82" cy="634.45" r="0.95"/><circle cx="566.32" cy="634.45" r="0.95"/><circle cx="571.49" cy="634.45" r="0.95"/><circle cx="574.99" cy="634.45" r="0.95"/><circle cx="580.15" cy="634.45" r="0.95"/><circle cx="583.65" cy="624.07" r="0.95"/><circle cx="588.81" cy="620.52" r="0.95"/><circle cx="592.31" cy="616.97" r="0.95"/><circle cx="597.47" cy="613.42" r="0.95"/><circle cx="600.97" cy="616.97" r="0.95"/><circle cx="606.14" cy="620.52" r="0.95"/><circle cx="609.64" cy="624.07" r="0.95"/><circle cx="614.80" cy="624.07" r="0.95"/><circle cx="614.80" cy="634.45" r="0.95"/><circle cx="618.30" cy="616.97" r="0.95"/><circle cx="618.30" cy="620.52" r="0.95"/><circle cx="623.46" cy="603.04" r="0.95"/><circle cx="623.46" cy="613.42" r="0.95"/><circle cx="626.96" cy="595.94" r="0.95"/><circle cx="626.96" cy="599.49" r="0.95"/><circle cx="632.13" cy="592.39" r="0.95"/><circle cx="632.13" cy="595.94" r="0.95"/><circle cx="635.63" cy="599.49" r="0.95"/><circle cx="635.63" cy="603.04" r="0.95"/><circle cx="640.79" cy="613.42" r="0.95"/><circle cx="640.79" cy="616.97" r="0.95"/><circle cx="644.29" cy="620.52" r="0.95"/><circle cx="644.29" cy="624.07" r="0.95"/><circle cx="649.45" cy="634.45" r="0.95"/><circle cx="652.95" cy="624.07" r="0.95"/><circle cx="658.12" cy="620.52" r="0.95"/><circle cx="661.62" cy="616.97" r="0.95"/><circle cx="666.78" cy="613.42" r="0.95"/><circle cx="670.28" cy="616.97" r="0.95"/><circle cx="675.44" cy="620.52" r="0.95"/><circle cx="678.94" cy="624.07" r="0.95"/><circle cx="684.10" cy="578.46" r="0.95"/><circle cx="684.10" cy="582.01" r="0.95"/><circle cx="684.10" cy="592.39" r="0.95"/><circle cx="684.10" cy="595.94" r="0.95"/><circle cx="684.10" cy="599.49" r="0.95"/><circle cx="684.10" cy="603.04" r="0.95"/><circle cx="684.10" cy="613.42" r="0.95"/><circle cx="684.10" cy="616.97" r="0.95"/><circle cx="684.10" cy="620.52" r="0.95"/><circle cx="684.10" cy="624.07" r="0.95"/><circle cx="684.10" cy="634.45" r="0.95"/><circle cx="687.60" cy="518.92" r="0.95"/><circle cx="687.60" cy="529.30" r="0.95"/><circle cx="687.60" cy="532.85" r="0.95"/><circle cx="687.60" cy="536.40" r="0.95"/><circle cx="687.60" cy="539.95" r="0.95"/><circle cx="687.60" cy="550.33" r="0.95"/><circle cx="687.60" cy="553.88" r="0.95"/><circle cx="687.60" cy="557.43" r="0.95"/><circle cx="687.60" cy="560.98" r="0.95"/><circle cx="687.60" cy="571.36" r="0.95"/><circle cx="687.60" cy="574.91" r="0.95"/><circle cx="692.77" cy="466.21" r="0.95"/><circle cx="692.77" cy="469.76" r="0.95"/><circle cx="692.77" cy="473.31" r="0.95"/><circle cx="692.77" cy="476.86" r="0.95"/><circle cx="692.77" cy="487.24" r="0.95"/><circle cx="692.77" cy="490.79" r="0.95"/><circle cx="692.77" cy="494.34" r="0.95"/><circle cx="692.77" cy="497.89" r="0.95"/><circle cx="692.77" cy="508.27" r="0.95"/><circle cx="692.77" cy="511.82" r="0.95"/><circle cx="692.77" cy="515.37" r="0.95"/><circle cx="696.27" cy="406.67" r="0.95"/><circle cx="696.27" cy="410.22" r="0.95"/><circle cx="696.27" cy="413.77" r="0.95"/><circle cx="696.27" cy="424.15" r="0.95"/><circle cx="696.27" cy="427.70" r="0.95"/><circle cx="696.27" cy="431.25" r="0.95"/><circle cx="696.27" cy="434.80" r="0.95"/><circle cx="696.27" cy="445.18" r="0.95"/><circle cx="696.27" cy="448.73" r="0.95"/><circle cx="696.27" cy="452.28" r="0.95"/><circle cx="696.27" cy="455.83" r="0.95"/><circle cx="701.43" cy="403.12" r="0.95"/><circle cx="701.43" cy="406.67" r="0.95"/><circle cx="701.43" cy="410.22" r="0.95"/><circle cx="701.43" cy="413.77" r="0.95"/><circle cx="701.43" cy="424.15" r="0.95"/><circle cx="701.43" cy="427.70" r="0.95"/><circle cx="701.43" cy="431.25" r="0.95"/><circle cx="701.43" cy="434.80" r="0.95"/><circle cx="701.43" cy="445.18" r="0.95"/><circle cx="701.43" cy="448.73" r="0.95"/><circle cx="701.43" cy="452.28" r="0.95"/><circle cx="704.93" cy="455.83" r="0.95"/><circle cx="704.93" cy="466.21" r="0.95"/><circle cx="704.93" cy="469.76" r="0.95"/><circle cx="704.93" cy="473.31" r="0.95"/><circle cx="704.93" cy="476.86" r="0.95"/><circle cx="704.93" cy="487.24" r="0.95"/><circle cx="704.93" cy="490.79" r="0.95"/><circle cx="704.93" cy="494.34" r="0.95"/><circle cx="704.93" cy="497.89" r="0.95"/><circle cx="704.93" cy="508.27" r="0.95"/><circle cx="704.93" cy="511.82" r="0.95"/><circle cx="710.09" cy="515.37" r="0.95"/><circle cx="710.09" cy="518.92" r="0.95"/><circle cx="710.09" cy="529.30" r="0.95"/><circle cx="710.09" cy="532.85" r="0.95"/><circle cx="710.09" cy="536.40" r="0.95"/><circle cx="710.09" cy="539.95" r="0.95"/><circle cx="710.09" cy="550.33" r="0.95"/><circle cx="710.09" cy="553.88" r="0.95"/><circle cx="710.09" cy="557.43" r="0.95"/><circle cx="710.09" cy="560.98" r="0.95"/><circle cx="710.09" cy="571.36" r="0.95"/><circle cx="713.59" cy="574.91" r="0.95"/><circle cx="713.59" cy="578.46" r="0.95"/><circle cx="713.59" cy="582.01" r="0.95"/><circle cx="713.59" cy="592.39" r="0.95"/><circle cx="713.59" cy="595.94" r="0.95"/><circle cx="713.59" cy="599.49" r="0.95"/><circle cx="713.59" cy="603.04" r="0.95"/><circle cx="713.59" cy="613.42" r="0.95"/><circle cx="713.59" cy="616.97" r="0.95"/><circle cx="713.59" cy="620.52" r="0.95"/><circle cx="713.59" cy="624.07" r="0.95"/><circle cx="718.76" cy="634.45" r="0.95"/><circle cx="722.26" cy="624.07" r="0.95"/><circle cx="727.42" cy="620.52" r="0.95"/><circle cx="730.92" cy="616.97" r="0.95"/><circle cx="736.08" cy="574.91" r="0.95"/><circle cx="736.08" cy="578.46" r="0.95"/><circle cx="736.08" cy="582.01" r="0.95"/><circle cx="736.08" cy="592.39" r="0.95"/><circle cx="736.08" cy="595.94" r="0.95"/><circle cx="736.08" cy="599.49" r="0.95"/><circle cx="736.08" cy="603.04" r="0.95"/><circle cx="736.08" cy="613.42" r="0.95"/><circle cx="739.58" cy="532.85" r="0.95"/><circle cx="739.58" cy="536.40" r="0.95"/><circle cx="739.58" cy="539.95" r="0.95"/><circle cx="739.58" cy="550.33" r="0.95"/><circle cx="739.58" cy="553.88" r="0.95"/><circle cx="739.58" cy="557.43" r="0.95"/><circle cx="739.58" cy="560.98" r="0.95"/><circle cx="739.58" cy="571.36" r="0.95"/><circle cx="744.75" cy="490.79" r="0.95"/><circle cx="744.75" cy="494.34" r="0.95"/><circle cx="744.75" cy="497.89" r="0.95"/><circle cx="744.75" cy="508.27" r="0.95"/><circle cx="744.75" cy="511.82" r="0.95"/><circle cx="744.75" cy="515.37" r="0.95"/><circle cx="744.75" cy="518.92" r="0.95"/><circle cx="744.75" cy="529.30" r="0.95"/><circle cx="748.25" cy="448.73" r="0.95"/><circle cx="748.25" cy="452.28" r="0.95"/><circle cx="748.25" cy="455.83" r="0.95"/><circle cx="748.25" cy="466.21" r="0.95"/><circle cx="748.25" cy="469.76" r="0.95"/><circle cx="748.25" cy="473.31" r="0.95"/><circle cx="748.25" cy="476.86" r="0.95"/><circle cx="748.25" cy="487.24" r="0.95"/><circle cx="753.41" cy="445.18" r="0.95"/><circle cx="753.41" cy="448.73" r="0.95"/><circle cx="753.41" cy="452.28" r="0.95"/><circle cx="753.41" cy="455.83" r="0.95"/><circle cx="753.41" cy="466.21" r="0.95"/><circle cx="753.41" cy="469.76" r="0.95"/><circle cx="753.41" cy="473.31" r="0.95"/><circle cx="753.41" cy="476.86" r="0.95"/><circle cx="756.91" cy="487.24" r="0.95"/><circle cx="756.91" cy="490.79" r="0.95"/><circle cx="756.91" cy="494.34" r="0.95"/><circle cx="756.91" cy="497.89" r="0.95"/><circle cx="756.91" cy="508.27" r="0.95"/><circle cx="756.91" cy="511.82" r="0.95"/><circle cx="756.91" cy="515.37" r="0.95"/><circle cx="756.91" cy="518.92" r="0.95"/><circle cx="762.07" cy="529.30" r="0.95"/><circle cx="762.07" cy="532.85" r="0.95"/><circle cx="762.07" cy="536.40" r="0.95"/><circle cx="762.07" cy="539.95" r="0.95"/><circle cx="762.07" cy="550.33" r="0.95"/><circle cx="762.07" cy="553.88" r="0.95"/><circle cx="762.07" cy="557.43" r="0.95"/><circle cx="762.07" cy="560.98" r="0.95"/><circle cx="765.57" cy="571.36" r="0.95"/><circle cx="765.57" cy="574.91" r="0.95"/><circle cx="765.57" cy="578.46" r="0.95"/><circle cx="765.57" cy="582.01" r="0.95"/><circle cx="765.57" cy="592.39" r="0.95"/><circle cx="765.57" cy="595.94" r="0.95"/><circle cx="765.57" cy="599.49" r="0.95"/><circle cx="765.57" cy="603.04" r="0.95"/><circle cx="770.73" cy="613.42" r="0.95"/><circle cx="774.23" cy="613.42" r="0.95"/><circle cx="779.40" cy="613.42" r="0.95"/><circle cx="782.90" cy="613.42" r="0.95"/><circle cx="788.06" cy="595.94" r="0.95"/><circle cx="788.06" cy="599.49" r="0.95"/><circle cx="788.06" cy="603.04" r="0.95"/><circle cx="788.06" cy="613.42" r="0.95"/><circle cx="791.56" cy="574.91" r="0.95"/><circle cx="791.56" cy="578.46" r="0.95"/><circle cx="791.56" cy="582.01" r="0.95"/><circle cx="791.56" cy="592.39" r="0.95"/><circle cx="796.72" cy="553.88" r="0.95"/><circle cx="796.72" cy="557.43" r="0.95"/><circle cx="796.72" cy="560.98" r="0.95"/><circle cx="796.72" cy="571.36" r="0.95"/><circle cx="800.22" cy="532.85" r="0.95"/><circle cx="800.22" cy="536.40" r="0.95"/><circle cx="800.22" cy="539.95" r="0.95"/><circle cx="800.22" cy="550.33" r="0.95"/><circle cx="805.39" cy="529.30" r="0.95"/><circle cx="805.39" cy="532.85" r="0.95"/><circle cx="805.39" cy="536.40" r="0.95"/><circle cx="805.39" cy="539.95" r="0.95"/><circle cx="808.89" cy="550.33" r="0.95"/><circle cx="808.89" cy="553.88" r="0.95"/><circle cx="808.89" cy="557.43" r="0.95"/><circle cx="808.89" cy="560.98" r="0.95"/><circle cx="814.05" cy="571.36" r="0.95"/><circle cx="814.05" cy="574.91" r="0.95"/><circle cx="814.05" cy="578.46" r="0.95"/><circle cx="814.05" cy="582.01" r="0.95"/><circle cx="817.55" cy="592.39" r="0.95"/><circle cx="817.55" cy="595.94" r="0.95"/><circle cx="817.55" cy="599.49" r="0.95"/><circle cx="817.55" cy="603.04" r="0.95"/><circle cx="822.71" cy="613.42" r="0.95"/><circle cx="826.21" cy="616.97" r="0.95"/><circle cx="831.38" cy="620.52" r="0.95"/><circle cx="834.88" cy="624.07" r="0.95"/><circle cx="840.04" cy="634.45" r="0.95"/><circle cx="843.54" cy="624.07" r="0.95"/><circle cx="848.70" cy="620.52" r="0.95"/><circle cx="852.20" cy="616.97" r="0.95"/><circle cx="857.36" cy="613.42" r="0.95"/><circle cx="860.86" cy="613.42" r="0.95"/></g>
</svg>
<div id="txt">
<div class="t" style="left:30.76px;top:-3px">Round trip latency, ms</div>
<div class="t" style="left:290.65px;top:-3px">Request Count</div>
<div class="t" style="left:550.54px;top:-3px">Load Limits</div>
<div class="t" style="left:30.76px;top:145px">Press Q or Ctrl+C to quit | avg rps: 4978.98, current rps: 4996.07, elapsed: 34s</div>
<div class="t" style="left:30.76px;top:313px">Min/Max Latency, ms</div>
<div class="t" style="left:13.43px;top:18px">100%: 54.73ms</div>
<div class="t" style="left:13.43px;top:39px">99%: 15.52ms</div>
<div class="t" style="left:13.43px;top:60px">95%: 5.32ms</div>
<div class="t" style="left:13.43px;top:82px">90%: 4.21ms</div>
<div class="t" style="left:13.43px;top:103px">50%: 0.13ms</div>
<div class="t" style="left:273.32px;top:18px">200: 169286</div>
<div class="t" style="left:273.32px;top:39px">tot: 169286</div>
<div class="t" style="left:533.21px;top:18px">Concurrency: 200, &lt;Right&gt;/&lt;Left&gt;: ±5%</div>
<div class="t" style="left:533.21px;top:39px">Rate Limit: 5000, &lt;Up&gt;/&lt;Down&gt;: ±5%</div>
<div class="t" style="left:13.43px;top:670px">0.00</div>
<div class="t" style="left:13.43px;top:628px">6.84</div>
<div class="t" style="left:13.43px;top:586px">13.68</div>
<div class="t" style="left:13.43px;top:544px">20.52</div>
<div class="t" style="left:13.43px;top:502px">27.37</div>
<div class="t" style="left:13.43px;top:460px">34.21</div>
<div class="t" style="left:13.43px;top:418px">41.05</div>
<div class="t" style="left:13.43px;top:376px">47.89</div>
<div class="t" style="left:13.43px;top:334px">54.73</div>
<div class="t" style="left:48.09px;top:691px">0</div>
<div class="t" style="left:91.40px;top:691px">3</div>
<div class="t" style="left:143.38px;top:691px">6</div>
<div class="t" style="left:195.36px;top:691px">9</div>
<div class="t" style="left:247.33px;top:691px">12</div>
<div class="t" style="left:316.64px;top:691px">16</div>
<div class="t" style="left:385.94px;top:691px">20</div>
<div class="t" style="left:455.25px;top:691px">24</div>
<div class="t" style="left:524.55px;top:691px">28</div>
<div class="t" style="left:593.85px;top:691px">32</div>
<div class="t" style="left:663.16px;top:691px">36</div>
<div class="t" style="left:732.46px;top:691px">40</div>
<div class="t" style="left:801.77px;top:691px">44</div>
</div>
</div>
</body>
</html>
